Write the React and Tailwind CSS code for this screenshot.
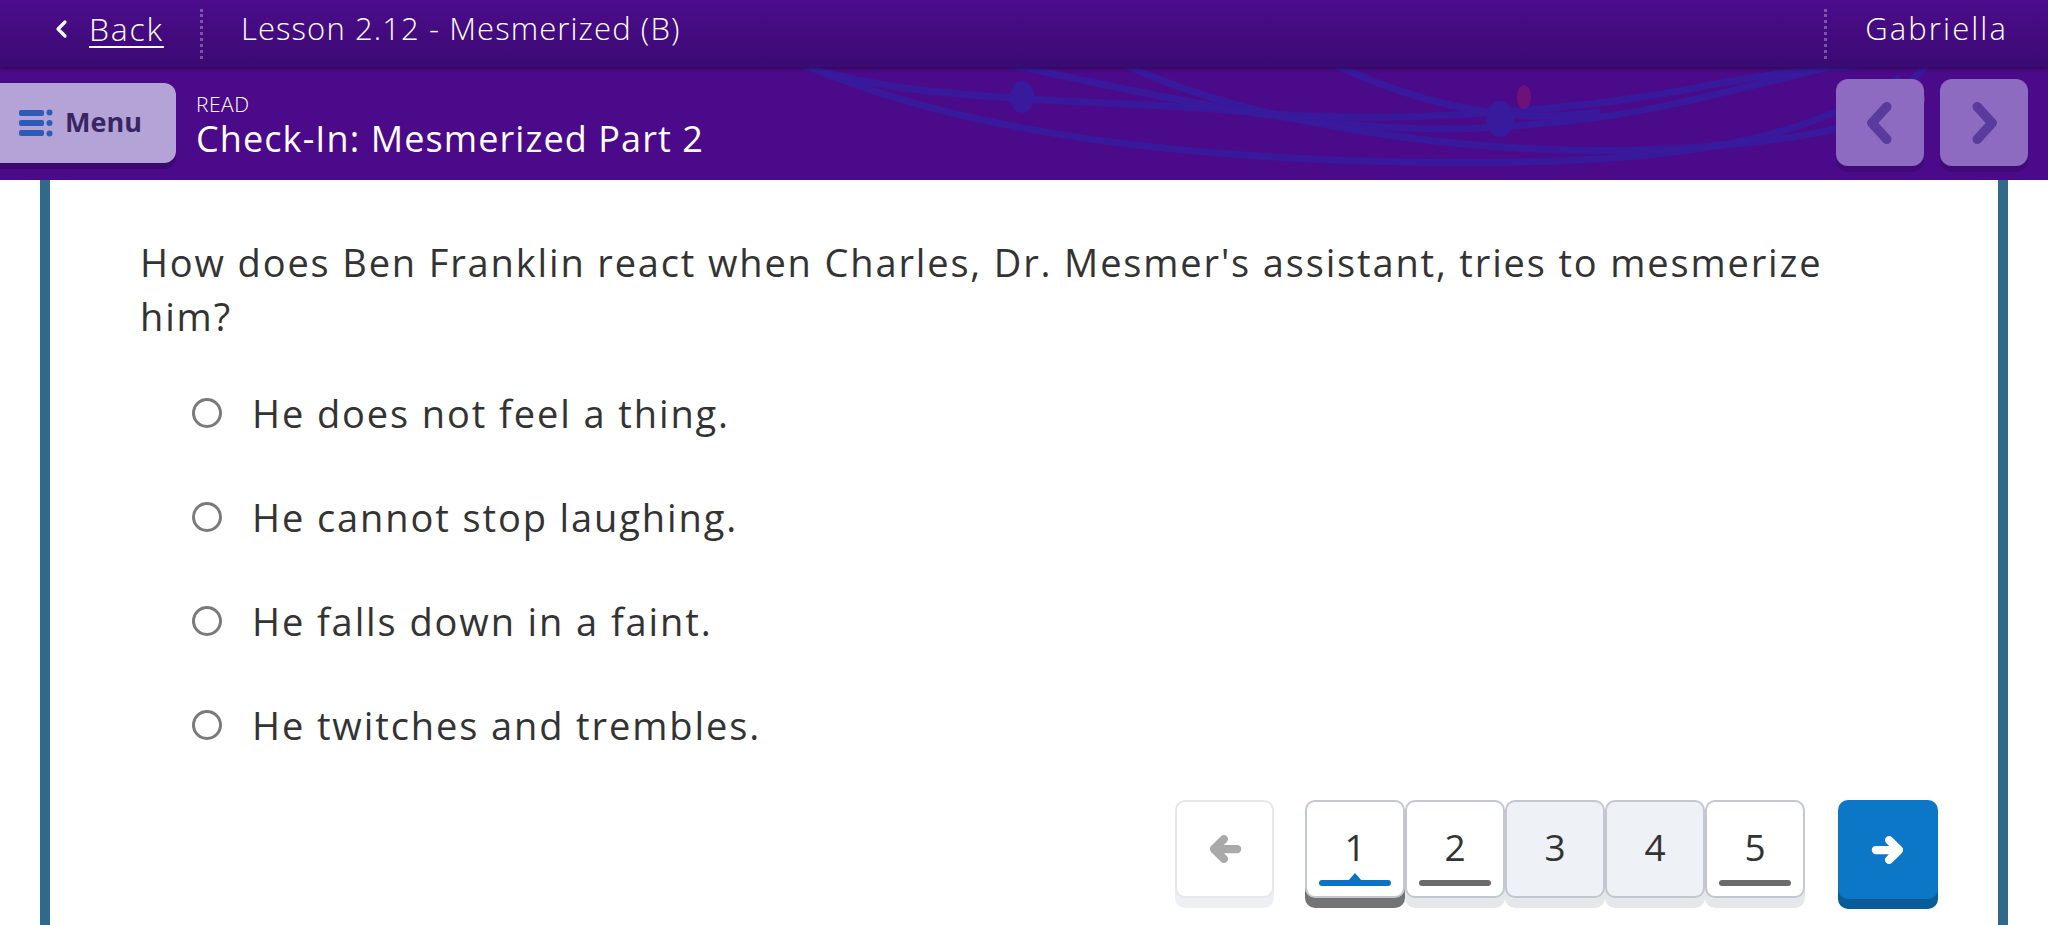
import React from "react";

const FONT = { fontFamily: "'Open Sans', 'Noto Sans', sans-serif" };

function MenuIcon() {
  return (
    <svg width="34" height="28" viewBox="0 0 34 28" fill="#2d5cb8">
      <rect x="0" y="1" width="25" height="6" rx="2" />
      <rect x="0" y="11" width="25" height="6" rx="2" />
      <rect x="0" y="21" width="25" height="6" rx="2" />
      <circle cx="30.5" cy="3.5" r="3" />
      <circle cx="30.5" cy="14" r="3" />
      <circle cx="30.5" cy="24.5" r="3" />
    </svg>
  );
}

function Chevron({ dir = "left", color, size = 40, sw = 7 }) {
  const pts = dir === "left" ? "25,8 14,20 25,32" : "15,8 26,20 15,32";
  return (
    <svg width={size} height={size} viewBox="0 0 40 40">
      <polyline points={pts} fill="none" stroke={color} strokeWidth={sw} strokeLinecap="round" strokeLinejoin="round" />
    </svg>
  );
}

function Arrow({ dir = "left", color }) {
  const d = dir === "left" ? "M31 20H12 M19 11l-9 9 9 9" : "M9 20h19 M21 11l9 9-9 9";
  return (
    <svg width="44" height="44" viewBox="0 0 40 40">
      <path d={d} fill="none" stroke={color} strokeWidth="7.5" strokeLinecap="round" strokeLinejoin="round" />
    </svg>
  );
}

function Decoration() {
  return (
    <svg className="absolute left-0 top-0 pointer-events-none" width="2048" height="113" viewBox="0 0 2048 113">
      <g fill="none" stroke="#381a9c" strokeOpacity="0.95" strokeWidth="7">
        <path d="M780 -10 C 900 40, 1100 30, 1250 45 S 1600 40, 1700 20 S 1900 -5, 1950 -10" />
        <path d="M810 0 C 950 60, 1150 90, 1400 95 S 1800 80, 1900 10" />
        <path d="M1000 -5 C 1200 40, 1350 70, 1500 60 S 1700 30, 1850 -5" />
        <path d="M1120 -5 C 1250 60, 1500 95, 1700 80 S 1880 40, 1930 -5" />
        <path d="M1330 -5 C 1400 30, 1500 60, 1600 45" />
      </g>
      <g fill="#381a9c">
        <ellipse cx="1022" cy="30" rx="12" ry="16" />
        <ellipse cx="1500" cy="52" rx="14" ry="18" />
      </g>
      <ellipse cx="1524" cy="30" rx="7" ry="12" fill="#7a1670" fillOpacity="0.7" />
      <ellipse cx="1916" cy="32" rx="9" ry="9" fill="#a05a7a" fillOpacity="0.5" />
    </svg>
  );
}

function PageBtn({ n, bg, bar, active }) {
  return (
    <div
      className={
        "relative w-[100px] h-[98px] rounded-[10px] border-2 border-[#c3c7d0] flex flex-col items-center justify-center " +
        bg +
        (active ? " shadow-[0_10px_0_#747474]" : " shadow-[0_10px_0_#e6e7e9]")
      }
    >
      <span className="text-[37px] leading-none text-[#333] mb-[6px]">{n}</span>
      {bar && (
        <div className="absolute left-[12px] right-[12px] bottom-[10px] h-[6px] rounded-full" style={{ background: bar }}>
          {active && (
            <div className="absolute left-1/2 -translate-x-1/2 -top-[7px] w-0 h-0 border-l-[7px] border-r-[7px] border-b-[8px] border-l-transparent border-r-transparent border-b-[#0b72c4]" />
          )}
        </div>
      )}
    </div>
  );
}

export default function App() {
  const options = [
    "He does not feel a thing.",
    "He cannot stop laughing.",
    "He falls down in a faint.",
    "He twitches and trembles.",
  ];
  return (
    <div className="w-[2048px] h-[925px] overflow-hidden bg-white flex flex-col" style={FONT}>
      {/* top bar */}
      <div className="h-[67px] shrink-0 flex items-center pb-[10px] bg-gradient-to-b from-[#4c0c8c] to-[#3b0a72] text-white relative z-10 shadow-[0_2px_3px_rgba(0,0,0,0.35)]">
        <div className="flex items-center pl-[50px]">
          <svg width="24" height="24" viewBox="0 0 24 24">
            <polyline points="15,5 8,12 15,19" fill="none" stroke="white" strokeWidth="3.2" strokeLinecap="round" strokeLinejoin="round" />
          </svg>
          <span className="ml-[15px] text-[32px] tracking-[1.8px] underline underline-offset-[5px] decoration-2 font-light">Back</span>
        </div>
        <div className="ml-[36px] h-[50px] mt-[10px] border-l-[3px] border-dotted border-white/30" />
        <span className="ml-[38px] text-[31px] tracking-[1.1px] font-light">Lesson 2.12 - Mesmerized (B)</span>
        <div className="flex-1" />
        <div className="h-[50px] mt-[10px] border-l-[3px] border-dotted border-white/30" />
        <span className="ml-[38px] mr-[40px] text-[31px] tracking-[2.1px] font-light">Gabriella</span>
      </div>

      {/* second bar */}
      <div className="h-[113px] shrink-0 bg-[#4b0a8a] relative flex items-center">
        <Decoration />
        <div className="relative w-[176px] h-[80px] -mt-[2px] rounded-r-[12px] bg-[#b4a3d6] shadow-[0_6px_0_#3d0872] flex items-center pl-[19px]">
          <MenuIcon />
          <span className="ml-[12px] text-[27px] font-bold text-[#3a2563]">Menu</span>
        </div>
        <div className="relative ml-[20px] flex flex-col text-white mt-[4px]">
          <span className="text-[21px] leading-[26px] font-light tracking-[0.5px]">READ</span>
          <span className="text-[36px] leading-[44px] font-medium tracking-[1.1px]">Check-In: Mesmerized Part 2</span>
        </div>
        <div className="flex-1" />
        <div className="relative flex gap-[16px] mr-[20px] -mt-[2px]">
          <div className="w-[88px] h-[87px] rounded-[12px] bg-[#8c6bc0] shadow-[0_6px_0_#3f0a78] flex items-center justify-center">
            <Chevron dir="left" color="#5a3a9c" size={54} />
          </div>
          <div className="w-[88px] h-[87px] rounded-[12px] bg-[#8c6bc0] shadow-[0_6px_0_#3f0a78] flex items-center justify-center">
            <Chevron dir="right" color="#5a3a9c" size={54} />
          </div>
        </div>
      </div>

      {/* main */}
      <div className="flex-1 mx-[40px] border-x-[10px] border-[#2f6a8b] bg-white pt-[55px] pl-[90px]">
        <p className="w-[1720px] text-[38px] leading-[54px] tracking-[1.85px] text-[#333]">
          How does Ben Franklin react when Charles, Dr. Mesmer's assistant, tries to mesmerize him?
        </p>
        <div className="mt-[18px] pl-[52px] flex flex-col">
          {options.map((o) => (
            <div key={o} className="h-[104px] flex items-center">
              <div className="w-[30px] h-[30px] rounded-full border-[3px] border-[#7a7a7a] bg-white" />
              <span className="ml-[30px] text-[38px] tracking-[1.9px] text-[#333]">{o}</span>
            </div>
          ))}
        </div>
        <div className="mt-[23px] flex items-start justify-end pr-[60px]">
          <div className="w-[99px] h-[98px] rounded-[10px] border-2 border-[#e6e7ea] bg-white shadow-[0_10px_0_#eeeff1] flex items-center justify-center">
            <Arrow dir="left" color="#a9a9a9" />
          </div>
          <div className="ml-[31px] flex">
            <PageBtn n="1" bg="bg-white" bar="#0b72c4" active />
            <PageBtn n="2" bg="bg-white" bar="#6b6b6b" />
            <PageBtn n="3" bg="bg-[#eef1f5]" />
            <PageBtn n="4" bg="bg-[#eef1f5]" />
            <PageBtn n="5" bg="bg-white" bar="#6b6b6b" />
          </div>
          <div className="ml-[33px] w-[100px] h-[99px] rounded-[10px] bg-[#0b77c6] shadow-[0_10px_0_#095c98] flex items-center justify-center">
            <Arrow dir="right" color="white" />
          </div>
        </div>
      </div>
    </div>
  );
}
